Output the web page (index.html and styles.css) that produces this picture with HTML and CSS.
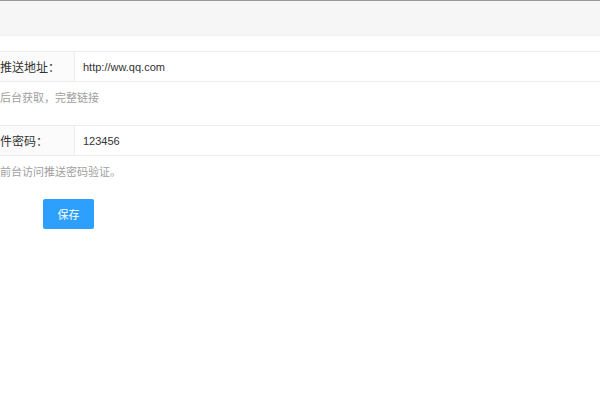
FILE: index.html
```html
<!DOCTYPE html>
<html>
<head>
	<meta charset="utf-8">
	<title>推送设置</title>
	<link rel="stylesheet" href="styles.css">
</head>
<body>
	<!-- top bar -->
	<div class="top-bar"></div>

	<!-- settings form -->
	<div class="form">
		<div class="form-row">
			<div class="form-label">推送地址：</div>
			<div class="form-input">http://ww.qq.com</div>
		</div>
		<div class="form-hint">后台获取，完整链接</div>

		<div class="form-row">
			<div class="form-label">件密码：</div>
			<div class="form-input">123456</div>
		</div>
		<div class="form-hint">前台访问推送密码验证。</div>

		<div class="form-actions">
			<button class="btn">保存</button>
		</div>
	</div>
</body>
</html>
```

FILE: styles.css
```css
body {
	margin: 0;
	background-color: #fff;
	font-family: "Liberation Sans", "Noto Sans CJK SC", sans-serif;
	color: #333;
}

/* top bar */
.top-bar {
	height: 34px;
	background-color: #f6f6f6;
	border-top: 1px solid #9a9a9a;
	border-bottom: 1px solid #f0f0f0;
}

/* form rows */
.form {
	padding-top: 15px;
}

.form-row {
	display: flex;
	height: 29px;
	border-top: 1px solid #ececec;
	border-bottom: 1px solid #ececec;
}

.form-label {
	width: 75px;
	flex-shrink: 0;
	display: flex;
	align-items: center;
	box-sizing: border-box;
	background-color: #fbfbfb;
	border-right: 1px solid #ececec;
	font-size: 12px;
	white-space: nowrap;
}

.form-input {
	flex: 1;
	padding-left: 8px;
	display: flex;
	align-items: center;
	font-size: 11px;
}

.form-hint {
	margin: 5px 0 16px;
	line-height: 22px;
	font-size: 11px;
	color: #a0a0a0;
}

.form-actions {
	padding-left: 43px;
}

.btn {
	width: 51px;
	height: 30px;
	border: none;
	border-radius: 2px;
	background-color: #2d9ffd;
	color: #fff;
	font-family: "Noto Sans CJK SC", sans-serif;
	font-size: 11px;
	padding: 0;
}
```
